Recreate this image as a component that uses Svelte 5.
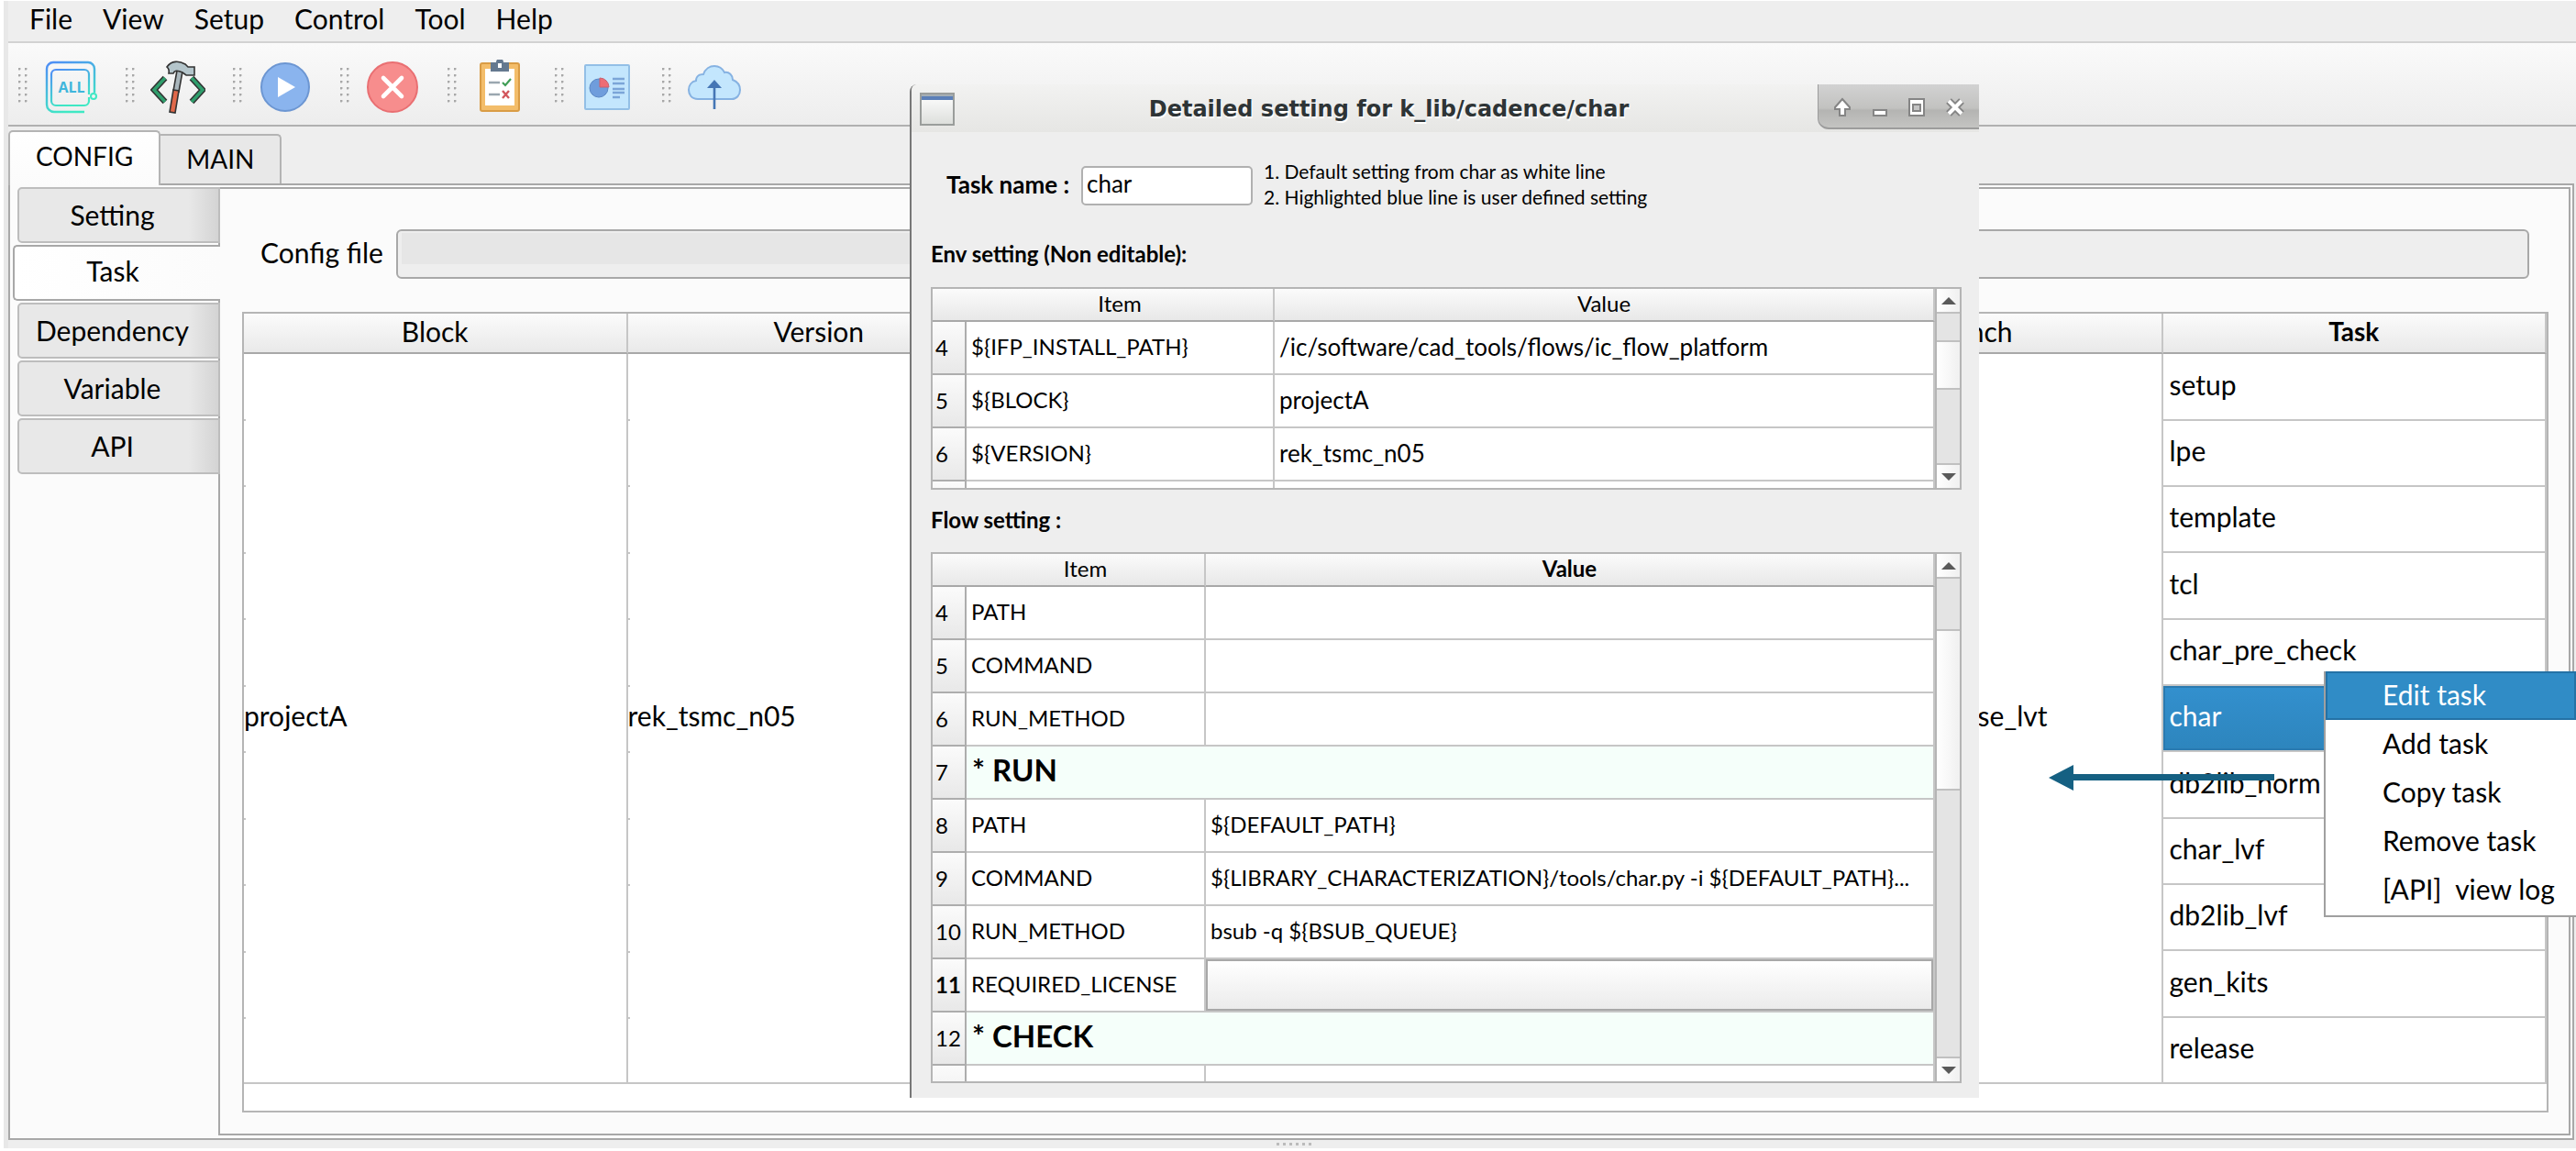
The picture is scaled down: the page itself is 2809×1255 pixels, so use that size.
<script>
  const menus = ['File', 'View', 'Setup', 'Control', 'Tool', 'Help'];
  const tools = ['Select all', 'Build', 'Run', 'Kill', 'Check', 'Report', 'Release'];
  const sideTabs = ['Setting', 'Task', 'Dependency', 'Variable', 'API'];
  const tasks = [
    'setup', 'lpe', 'template', 'tcl', 'char_pre_check', 'char',
    'db2lib_norm', 'char_lvf', 'db2lib_lvf', 'gen_kits', 'release'
  ];
  const env = [
    { n: 4, item: '${IFP_INSTALL_PATH}', value: '/ic/software/cad_tools/flows/ic_flow_platform' },
    { n: 5, item: '${BLOCK}', value: 'projectA' },
    { n: 6, item: '${VERSION}', value: 'rek_tsmc_n05' },
    { n: '', item: '', value: '' }
  ];
  const flow = [
    { n: 4, item: 'PATH', value: '' },
    { n: 5, item: 'COMMAND', value: '' },
    { n: 6, item: 'RUN_METHOD', value: '' },
    { n: 7, section: '* RUN' },
    { n: 8, item: 'PATH', value: '${DEFAULT_PATH}' },
    { n: 9, item: 'COMMAND', value: '${LIBRARY_CHARACTERIZATION}/tools/char.py -i ${DEFAULT_PATH}...' },
    { n: 10, item: 'RUN_METHOD', value: 'bsub -q ${BSUB_QUEUE}' },
    { n: 11, item: 'REQUIRED_LICENSE', picker: true },
    { n: 12, section: '* CHECK' },
    { n: '', item: '', value: '' }
  ];
  const actions = ['Edit task', 'Add task', 'Copy task', 'Remove task', '[API]\u00a0 view log'];
  const dots = [0, 1, 2, 3, 4, 5];
</script>

{#snippet scrollbar(kind)}
  <div class="scroll {kind}" aria-hidden="true">
    <div class="step"><svg width="16" height="8" viewBox="0 0 16 8"><path d="M0 8 8 0l8 8z" fill="#5a5a5a" /></svg></div>
    <div class="track"><div class="thumb"></div></div>
    <div class="step"><svg width="16" height="8" viewBox="0 0 16 8"><path d="M0 0h16L8 8z" fill="#5a5a5a" /></svg></div>
  </div>
{/snippet}

{#snippet toolIcon(i)}
  <svg width="60" height="60" viewBox="0 0 60 60" fill="none">
    {#if i === 0}
      <defs>
        <linearGradient id="all" x1="0" y1="0" x2="0.4" y2="1">
          <stop offset="0" stop-color="#4f8cf7" /><stop offset="1" stop-color="#3fe8c4" />
        </linearGradient>
      </defs>
      <path d="M56 36V10a7 7 0 0 0-7-7H11a7 7 0 0 0-7 7v39a8 8 0 0 0 8 8h33" stroke="url(#all)" stroke-width="2.4" />
      <path d="M50 41v4a5 5 0 0 1-5 5H14a5 5 0 0 1-5-5V16a5 5 0 0 1 5-5h31a5 5 0 0 1 5 5v22" stroke="url(#all)" stroke-width="2.2" />
      <circle cx="55" cy="40" r="3" stroke="#3fe8c4" stroke-width="2" />
      <text x="31" y="36" text-anchor="middle" class="all">ALL</text>
    {:else if i === 1}
      <path d="M16 20 4 33l12 13M45 20l12 13-12 13" stroke="#333" stroke-width="6.5" />
      <path d="M16 20 4 33l12 13M45 20l12 13-12 13" stroke="#2f9e6c" stroke-width="3.4" />
      <path d="M29 12l6 1-4 22-6-1z" fill="#a9b6bc" stroke="#333" stroke-width="1.6" />
      <path d="M25 33l6 1-4 24-6-1z" fill="#e0684a" stroke="#333" stroke-width="1.6" />
      <path d="M18 8c5-7 13-7 20-3l3 3h7v9h-9l-4-3c-6-3-9-2-10 1h-5c1-5-1-6-2-7z" fill="#b4c5cb" stroke="#333" stroke-width="1.6" />
    {:else if i === 2}
      <circle cx="30" cy="30" r="26" fill="#8ab4ee" stroke="#6c96d2" stroke-width="2" />
      <path d="M22 19v22l19-11z" fill="#fff" />
    {:else if i === 3}
      <circle cx="30" cy="30" r="27" fill="#f78d8d" stroke="#e96f72" stroke-width="2" />
      <path d="M20 20l20 20M40 20 20 40" stroke="#fff" stroke-width="4.6" stroke-linecap="round" />
    {:else if i === 4}
      <rect x="9" y="4" width="42" height="52" rx="2" fill="#f3bd6a" stroke="#d99c45" stroke-width="2" />
      <path d="M14 10h32v40H14z" fill="#fff" />
      <path d="M20 3h6a4 4 0 0 1 8 0h6v10H20z" fill="#65798f" />
      <path d="M28 4h4v5h-4z" fill="#fff" />
      <path d="M18 25h12M18 38h12" stroke="#9aa7b0" stroke-width="2.4" />
      <path d="M33 25l3 3 6-7" stroke="#3f9d55" stroke-width="2.2" />
      <path d="M33 34l7 8M40 34l-7 8" stroke="#d2565c" stroke-width="2.4" />
    {:else if i === 5}
      <rect x="6" y="6" width="48" height="48" rx="1" fill="#c3e6fd" stroke="#93bfe6" stroke-width="2" />
      <circle cx="21" cy="31" r="10" fill="#6f9ddc" stroke="#5b87c4" />
      <path d="M22 30V20a10 10 0 0 1 10 10z" fill="#ee6c74" stroke="#c9606e" />
      <path d="M36 21h13M36 26h13M36 32h13M36 36h13M36 41h8" stroke="#7ba5d8" stroke-width="2.4" />
    {:else}
      <path d="M12 43C5 43 2 38 2 33c0-5 3-9 8-10 0-5 4-7 8-7 2-6 7-9 12-9s9 3 11 7c5-1 9 3 9 8 5 2 8 6 8 11 0 6-4 10-9 10z" fill="#c3e6fd" stroke="#86b2e2" stroke-width="2" />
      <path d="M30 54V26" stroke="#4576b5" stroke-width="2.6" />
      <path d="M22 31l8-9 8 9z" fill="#4576b5" />
    {/if}
  </svg>
{/snippet}

<div class="app">
  <main class="window">
    <nav class="menubar" aria-label="Main menu">
      {#each menus as m}<button>{m}</button>{/each}
    </nav>

    <div class="toolbar" role="toolbar" aria-label="Actions">
      {#each tools as t, i}
        <div class="tool">
          <span class="grip"></span>
          <button aria-label={t}>{@render toolIcon(i)}</button>
        </div>
      {/each}
    </div>

    <div class="tabs" role="tablist">
      <button role="tab" aria-selected="true" class="tab active">CONFIG</button>
      <button role="tab" aria-selected="false" class="tab">MAIN</button>
    </div>

    <section class="pane">
      <div class="side" role="tablist" aria-orientation="vertical">
        {#each sideTabs as s}
          <button role="tab" aria-selected={s === 'Task'} class:active={s === 'Task'}>{s}</button>
        {/each}
      </div>
      <div class="inner">
        <div class="config">
          <label for="cfg">Config file</label>
          <input id="cfg" type="text" readonly />
        </div>
        <div class="grid">
          <table>
            <thead>
              <tr><th>Block</th><th>Version</th><th></th><th></th><th>Branch</th><th class="current">Task</th></tr>
            </thead>
            <tbody>
              {#each tasks as t, i}
                <tr>
                  {#if i === 0}
                    <td class="merged" rowspan="11">projectA</td>
                    <td class="merged" rowspan="11">rek_tsmc_n05</td>
                    <td class="merged" rowspan="11"></td>
                    <td class="merged" rowspan="11"></td>
                    <td class="merged branch" rowspan="11">base_lvt</td>
                  {/if}
                  <td class="task" class:selected={t === 'char'}>{t}</td>
                </tr>
              {/each}
            </tbody>
          </table>
        </div>
      </div>
    </section>

    <footer class="splitter">{#each dots as d}<i></i>{/each}</footer>
  </main>

  <svg class="arrow" width="246" height="28" viewBox="0 0 246 28" aria-hidden="true">
    <path d="M0 14 27 0v10h219v7H27v11z" fill="#156082" />
  </svg>

  <div class="context" role="menu">
    {#each actions as a, i}
      <button role="menuitem" class:hot={i === 0}>{a}</button>
    {/each}
  </div>

  <div class="dialog" role="dialog" aria-labelledby="dlg-title">
    <header>
      <svg class="winicon" width="38" height="36" viewBox="0 0 38 36">
        <defs>
          <linearGradient id="win" x1="0" y1="0" x2="0" y2="1">
            <stop offset="0" stop-color="#fff" /><stop offset="1" stop-color="#dcdedb" />
          </linearGradient>
        </defs>
        <rect x="1" y="1" width="36" height="34" fill="url(#win)" stroke="#9a9d9b" stroke-width="2" />
        <path d="M2 2h34v6H2z" fill="#5b7fb8" /><path d="M2 2h34v2H2z" fill="#a5aeb4" />
      </svg>
      <h1 id="dlg-title">Detailed setting for k_lib/cadence/char</h1>
      <div class="winbuttons">
        <button aria-label="Shade"><svg width="20" height="22" viewBox="0 0 20 22"><path d="M10 2 2 11v2h5v7h6v-7h5v-2z" fill="#fff" stroke="#858585" stroke-width="2" /></svg></button>
        <button aria-label="Minimize"><svg width="20" height="22" viewBox="0 0 20 22"><path d="M3 14h14v6H3z" fill="#fff" stroke="#858585" stroke-width="2" /></svg></button>
        <button aria-label="Maximize"><svg width="20" height="22" viewBox="0 0 20 22"><path d="M2 2h16v18H2z" fill="#fff" stroke="#858585" stroke-width="2" /><path d="M6 8h8v7H6z" fill="#c4c4c4" stroke="#858585" stroke-width="2" /></svg></button>
        <button aria-label="Close"><svg width="22" height="22" viewBox="0 0 22 22"><path d="M4 4l14 14M18 4 4 18" stroke="#858585" stroke-width="8" /><path d="M4 4l14 14M18 4 4 18" stroke="#fff" stroke-width="4" /></svg></button>
      </div>
    </header>

    <div class="body">
      <div class="name">
        <label for="task-name">Task name :</label>
        <input id="task-name" type="text" value="char" />
        <p>1. Default setting from char as white line<br />2. Highlighted blue line is user defined setting</p>
      </div>

      <h2>Env setting (Non editable):</h2>
      <div class="sheet env">
        <div class="view">
          <table>
            <colgroup><col class="num" /><col class="item" /><col /></colgroup>
            <thead><tr><th class="corner"></th><th>Item</th><th>Value</th></tr></thead>
            <tbody>
              {#each env as r}
                <tr><th class="row">{r.n}</th><td>{r.item}</td><td class="value">{r.value}</td></tr>
              {/each}
            </tbody>
          </table>
        </div>
        {@render scrollbar('short')}
      </div>

      <h2>Flow setting :</h2>
      <div class="sheet flow">
        <div class="view">
          <table>
            <colgroup><col class="num" /><col class="item" /><col /></colgroup>
            <thead><tr><th class="corner"></th><th>Item</th><th class="current">Value</th></tr></thead>
            <tbody>
              {#each flow as r}
                <tr>
                  <th class="row" class:current={r.picker}>{r.n}</th>
                  {#if r.section}
                    <td colspan="2" class="section">{r.section}</td>
                  {:else}
                    <td>{r.item}</td>
                    {#if r.picker}
                      <td class="pick"><button aria-label="Choose license"></button></td>
                    {:else}
                      <td>{r.value}</td>
                    {/if}
                  {/if}
                </tr>
              {/each}
            </tbody>
          </table>
        </div>
        {@render scrollbar('long')}
      </div>
    </div>
  </div>
</div>

<style>
  :global(body) {
    background: #fff;
  }
  .app,
  .app * {
    box-sizing: border-box;
  }
  .app {
    position: relative;
    display: flex;
    flex-direction: column;
    min-height: 100vh;
    padding: 1px 0 3px 4px;
    overflow: hidden;
    font-family: Lato, 'Liberation Sans', sans-serif;
    font-size: 30px;
    line-height: 34px;
    color: #000;
  }
  button,
  input {
    font: inherit;
    color: inherit;
    margin: 0;
    padding: 0;
    border: 0;
    background: none;
    border-radius: 0;
  }
  .window {
    flex: 1;
    display: flex;
    flex-direction: column;
    background: #eee;
    padding-left: 5px;
    box-shadow: inset 5px 0 #e8e8e8;
  }

  .menubar {
    display: flex;
    gap: 33px;
    height: 46px;
    padding: 2px 23px;
    align-items: flex-start;
    border-bottom: 2px solid #d2d2d2;
  }
  .toolbar {
    display: flex;
    height: 91px;
    padding: 6px 0 0 11px;
    align-items: center;
    background: linear-gradient(#fafafa, #ededed);
    border-bottom: 2px solid #b0b0b0;
  }
  .tool {
    display: flex;
    align-items: center;
    width: 117px;
    gap: 17px;
  }
  .tool button {
    display: flex;
  }
  .grip {
    width: 10px;
    height: 42px;
    background: radial-gradient(circle at 1px 1px, #a8a8a8 1px, transparent 2px) 0 0 / 7px 7px;
  }
  .all {
    font: 700 16px 'Open Sans', sans-serif;
    fill: #3fb6dc;
  }

  .tabs {
    display: flex;
    align-items: flex-end;
    height: 62px;
    font-size: 28px;
  }
  .tab {
    height: 54px;
    padding: 0 28px 3px;
    background: #e8e8e8;
    border: 2px solid #b4b4b4;
    border-width: 2px 2px 0 0;
    border-radius: 0 5px 0 0;
  }
  .tab.active {
    height: 60px;
    margin-bottom: -2px;
    padding: 0 28px 7px;
    background: linear-gradient(#fff, #fbfbfb);
    border-width: 2px 2px 0;
    border-radius: 5px 5px 0 0;
    z-index: 1;
  }
  .pane {
    flex: 1;
    display: flex;
    margin-right: 2px;
    padding: 2px 2px 3px 3px;
    background: #fbfbfb;
    border: 2px solid #a8a8a8;
  }
  .side {
    display: flex;
    flex-direction: column;
    align-items: flex-end;
    gap: 2px;
    width: 226px;
    margin-right: -2px;
    z-index: 1;
  }
  .side button {
    width: 221px;
    height: 61px;
    padding: 0 14px 1px 0;
    background: linear-gradient(90deg, #e8e8e8 85%, #d4d4d4);
    border: 2px solid #bdbdbd;
    border-radius: 5px 0 0 5px;
  }
  .side button.active {
    width: 226px;
    padding: 0 10px 5px 0;
    background: linear-gradient(90deg, #fff, #fbfbfb);
    border-color: #a8a8a8;
    border-right: 0;
  }
  .inner {
    flex: 1;
    display: flex;
    flex-direction: column;
    gap: 36px;
    padding: 44px 22px 23px 24px;
    border: 2px solid #a8a8a8;
  }
  .config {
    display: flex;
    align-items: center;
    gap: 12px;
    padding: 0 21px 0 20px;
  }
  .config label {
    width: 136px;
    padding-bottom: 5px;
    white-space: nowrap;
  }
  .config input {
    flex: 1;
    height: 54px;
    border: 2px solid #a8a8a8;
    border-radius: 6px;
    background: linear-gradient(#e6e6e6, #e6e6e6) 4px 2px / 570px 34px no-repeat #eee;
  }

  .grid {
    flex: 1;
    border: 2px solid #b5b5b5;
    background: #fff;
  }
  table {
    width: 100%;
    border-collapse: separate;
    border-spacing: 0;
    table-layout: fixed;
  }
  th {
    font-weight: 400;
    padding: 0;
  }
  th.current {
    font-weight: 700;
  }
  .grid th {
    height: 44px;
    padding-bottom: 5px;
    background: linear-gradient(#fbfbfb, #e9e9e9);
    border-right: 2px solid #c6c6c6;
    border-bottom: 2px solid #a8a8a8;
  }
  .grid th.current {
    font-size: 28px;
  }
  .grid td {
    padding: 0 0 6px;
    border-right: 2px solid #c6c6c6;
    border-bottom: 2px solid #c6c6c6;
    white-space: nowrap;
  }
  .grid .merged {
    background: repeating-linear-gradient(transparent 0 71px, #c6c6c6 71px 73px, transparent 73px 143px, #c6c6c6 143px 145px) 0 0 / 2px 100% no-repeat;
  }
  .grid .branch {
    text-align: right;
    padding-right: 124px;
  }
  .grid .task {
    height: 72px;
    padding-left: 7px;
  }
  .grid tr:nth-child(3n + 1) .task {
    height: 73px;
  }
  .grid .selected {
    color: #fff;
    background: linear-gradient(#3390ce, #2d85bd);
    box-shadow: inset 0 0 0 2px #2a7ab0;
  }

  .splitter {
    display: flex;
    justify-content: center;
    align-items: center;
    gap: 4px;
    height: 9px;
    padding-left: 4px;
  }
  .splitter i {
    width: 3px;
    height: 3px;
    background: #bbb;
  }

  .arrow {
    position: absolute;
    left: 2234px;
    top: 834px;
  }
  .context {
    position: absolute;
    left: 2534px;
    right: 0;
    top: 732px;
    display: flex;
    flex-direction: column;
    background: #fff;
    border-left: 2px solid #a0a0a0;
    border-bottom: 2px solid #a0a0a0;
    padding-bottom: 1px;
    white-space: pre;
  }
  .context button {
    height: 53px;
    padding: 0 0 4px 62px;
    text-align: left;
  }
  .context .hot {
    color: #fff;
    background: #308cc6;
    box-shadow: inset 0 0 0 2px #2472a6;
  }

  .dialog {
    position: absolute;
    left: 992px;
    top: 92px;
    width: 1166px;
    background: #eee;
    border-left: 2px solid #777;
    border-radius: 8px 0 0 0;
    font-size: 24px;
    line-height: 28px;
  }
  header {
    display: flex;
    height: 52px;
    padding-left: 9px;
    background: linear-gradient(#f2f2f1, #e6e6e4);
    border-radius: 6px 0 0 0;
  }
  .winicon {
    margin-top: 9px;
  }
  h1 {
    flex: 1;
    margin: 0;
    padding-left: 6px;
    font: 700 24px/54px 'DejaVu Sans', sans-serif;
    color: #2e3436;
    text-align: center;
    text-shadow: 1px 2px #fff;
  }
  .winbuttons {
    display: flex;
    align-items: center;
    justify-content: space-around;
    width: 176px;
    height: 49px;
    padding: 2px 5px 0 6px;
    background: linear-gradient(#d2d2d2, #c2c2c0 55%, #b4b4b2 60%, #c4c4c2);
    border: 2px solid #9c9c9c;
    border-width: 0 0 2px 1px;
    border-radius: 0 0 0 12px;
  }
  .winbuttons button {
    display: flex;
  }
  .body {
    padding: 33px 19px 16px 21px;
  }
  .name {
    display: flex;
    align-items: center;
    height: 50px;
    padding-left: 17px;
  }
  .name label {
    width: 147px;
    padding-bottom: 2px;
    font-size: 26px;
    font-weight: 700;
    white-space: nowrap;
  }
  .name input {
    width: 187px;
    height: 43px;
    padding: 0 4px 4px;
    font-size: 26px;
    background: #fff;
    border: 2px solid #b0b0b0;
    border-radius: 5px;
  }
  .name p {
    margin: 0 0 3px 12px;
    font-size: 21px;
    white-space: nowrap;
  }
  h2 {
    margin: 0;
    padding: 35px 0 22px;
    font-size: 24px;
    line-height: 29px;
    font-weight: 700;
  }
  h2 + .env + h2 {
    padding: 18px 0 21px;
  }
  .sheet {
    display: flex;
    height: 221px;
    background: #fff;
    border: 2px solid #b5b5b5;
    overflow: hidden;
  }
  .flow {
    height: 579px;
  }
  .view {
    flex: 1;
    overflow: hidden;
  }
  .num {
    width: 37px;
  }
  .env .item {
    width: 336px;
  }
  .flow .item {
    width: 261px;
  }
  .sheet thead th {
    height: 36px;
    padding-bottom: 3px;
    background: linear-gradient(#fbfbfb, #e8e8e8);
    border-right: 2px solid #c6c6c6;
    border-bottom: 2px solid #a8a8a8;
  }
  .sheet thead th.corner {
    border-right: 0;
    background: linear-gradient(#fbfbfb, #e8e8e8);
  }
  .sheet .row {
    height: 58px;
    padding: 0 0 0 3px;
    text-align: left;
    background: linear-gradient(#fbfbfb, #e8e8e8);
    border-right: 2px solid #adadad;
    border-bottom: 2px solid #adadad;
  }
  .sheet td {
    height: 58px;
    padding: 0 0 3px 5px;
    border-right: 2px solid #c6c6c6;
    border-bottom: 2px solid #c6c6c6;
    white-space: nowrap;
    overflow: hidden;
  }
  .sheet .value {
    font-size: 26px;
  }
  .sheet .section {
    padding: 0 0 6px 6px;
    font-size: 33px;
    font-weight: 700;
    background: #f5fffa;
  }
  .sheet .pick {
    padding: 0;
  }
  .pick button {
    display: block;
    width: 100%;
    height: 56px;
    background: linear-gradient(#fff, #ebebeb);
    border: 2px solid #a8a8a8;
  }
  .scroll {
    display: flex;
    flex-direction: column;
    width: 27px;
    border-left: 2px solid #b5b5b5;
  }
  .step {
    display: flex;
    align-items: center;
    justify-content: center;
    height: 25px;
    background: linear-gradient(90deg, #fff, #f0f0f0);
  }
  .track {
    flex: 1;
    padding-top: 29px;
    background: #e4e4e4;
    border: 2px solid #c0c0c0;
    border-width: 2px 0;
  }
  .long .track {
    padding-top: 55px;
  }
  .thumb {
    height: 54px;
    background: linear-gradient(90deg, #fff, #f0f0f0);
    border: 2px solid #c0c0c0;
    border-width: 2px 0;
  }
  .long .thumb {
    height: 176px;
  }
</style>
